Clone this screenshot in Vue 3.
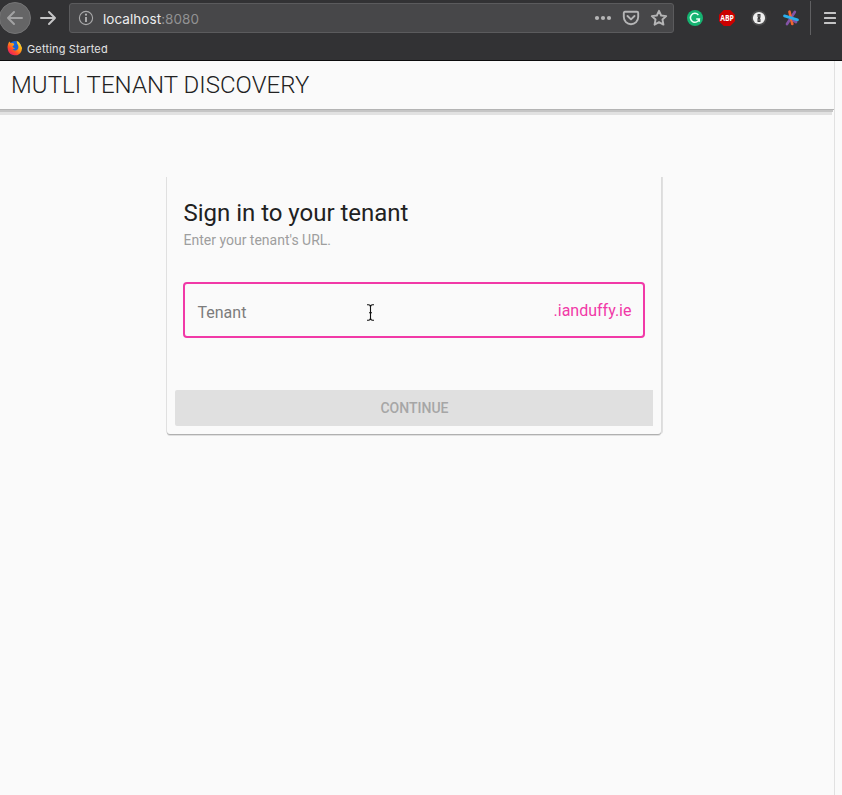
<script setup>
const host = 'localhost'
const port = ':8080'
const suffix = '.ianduffy.ie'
</script>

<template>
  <div class="window">
    <header class="chrome">
      <div class="toolbar">
        <div class="back">
          <svg width="18" height="18" viewBox="0 0 18 18" fill="none" stroke="#a2a2a3" stroke-width="2" stroke-linecap="round" stroke-linejoin="round"><path d="M16 9H2M8 3L2 9l6 6" /></svg>
        </div>
        <svg class="forward" width="18" height="18" viewBox="0 0 18 18" fill="none" stroke="#c5c5c6" stroke-width="2" stroke-linecap="round" stroke-linejoin="round"><path d="M2 9h14M10 3l6 6-6 6" /></svg>
        <div class="address">
          <svg class="info" width="16" height="16" viewBox="0 0 16 16"><circle cx="8" cy="8" r="6.6" fill="none" stroke="#a9a9aa" stroke-width="1.1" /><path d="M8 7v5" stroke="#b5b5b6" stroke-width="1.8" /><circle cx="8" cy="4.7" r="1.1" fill="#b5b5b6" /></svg>
          <span class="url">{{ host }}<span class="port">{{ port }}</span></span>
          <svg class="dots" width="18" height="6" viewBox="0 0 18 6" fill="#b5b5b6"><circle cx="3" cy="3" r="2.1" /><circle cx="9" cy="3" r="2.1" /><circle cx="15" cy="3" r="2.1" /></svg>
          <svg class="pocket" width="18" height="16" viewBox="0 0 18 16" fill="none" stroke="#b5b5b6" stroke-width="1.9" stroke-linecap="round" stroke-linejoin="round"><path d="M3 1.8h12q1.2 0 1.2 1.2v4a7.2 7.2 0 0 1-14.4 0V3Q1.8 1.8 3 1.8z" /><path d="M5.5 6L9 9.4 12.5 6" /></svg>
          <svg class="star" width="18" height="18" viewBox="0 0 18 18" fill="none" stroke="#b5b5b6" stroke-width="1.9" stroke-linejoin="round"><path d="M9 1.8l2.15 4.7 5.05.6-3.75 3.45 1 5.1L9 13.1l-4.45 2.55 1-5.1L1.8 7.1l5.05-.6z" /></svg>
        </div>
        <svg class="ext grammar" width="16" height="16" viewBox="0 0 16 16"><circle cx="8" cy="8" r="8" fill="#15b371" /><path d="M11.4 4.9A4.5 4.5 0 1 0 12.3 9H9.2M12.3 9v2.8" fill="none" stroke="#e9fff5" stroke-width="1.5" /></svg>
        <svg class="ext abp" width="16" height="16" viewBox="0 0 16 16"><path d="M4.8 0h6.4L16 4.8v6.4L11.2 16H4.8L0 11.2V4.8z" fill="#cb0000" /><text x="8" y="11.1" text-anchor="middle" textLength="13.6" lengthAdjust="spacingAndGlyphs">ABP</text></svg>
        <svg class="ext" width="16" height="16" viewBox="0 0 16 16"><circle cx="8" cy="8" r="7.7" fill="#4b4b4c" /><circle cx="8" cy="8" r="6.1" fill="#eee" /><path d="M6.5 4h3v3.5l-.6.7.6.7V12h-3V8.5l.6-.7-.6-.7z" fill="#3b3b3c" /><path d="M8 5v2.2M8 9v2" stroke="#aaa" stroke-width=".6" /></svg>
        <svg class="ext" width="16" height="16" viewBox="0 0 16 16" fill="none" stroke-width="2.7" stroke-linecap="round"><path d="M11.8 2L4 14" stroke="#8353a5" /><path d="M6.5 1.7L9.3 14" stroke="#f26430" /><path d="M10.5 10.5L13 12" stroke="#8353a5" /><path d="M1.5 5.9l13 4" stroke="#2caeea" /></svg>
        <div class="divider"></div>
        <svg class="menu" width="12" height="14" viewBox="0 0 12 14" fill="#c4c4c5"><rect y="1" width="12" height="2" rx=".5" /><rect y="6" width="12" height="2" rx=".5" /><rect y="11" width="12" height="2" rx=".5" /></svg>
      </div>
      <div class="bookmarks">
        <svg width="16" height="16" viewBox="0 0 16 16">
          <defs><linearGradient id="fire" x1="1" y1="0" x2=".2" y2="1"><stop offset="0" stop-color="#fff044" /><stop offset=".4" stop-color="#ffae14" /><stop offset=".7" stop-color="#ff4d29" /><stop offset="1" stop-color="#e81572" /></linearGradient></defs>
          <circle cx="8" cy="7.2" r="6.2" fill="#1764d7" />
          <path d="M2.2 1.5Q3 3 5 3.2 7 2.7 7.2 5L5.5 6.3Q5.5 8 8 8.2 6.9 9.3 5.5 9 8 11.8 10.5 9.5 12.5 7 10.2 3.7L9.6.8Q12 1.5 13.4 4.2q2.4 3.3 1.1 6.7A7.2 7.2 0 0 1 .9 10Q0 7 1 4.2z" fill="url(#fire)" />
        </svg>
        <span>Getting Started</span>
      </div>
    </header>

    <div class="viewport">
      <main class="page">
        <div class="app-bar"><h1>MUTLI TENANT DISCOVERY</h1></div>
        <form class="card" @submit.prevent>
          <div class="content">
            <h2>Sign in to your tenant</h2>
            <p>Enter your tenant's URL.</p>
            <div class="field">
              <span class="label">Tenant</span>
              <span class="suffix">{{ suffix }}</span>
              <svg class="cursor" width="9" height="17" viewBox="0 0 9 17" fill="none" stroke="#111" stroke-width="1.1"><path d="M1 .8h1.5Q4.5.8 4.5 3v11q0 2.2-2 2.2H1M8 .8H6.5Q4.5.8 4.5 3v11q0 2.2 2 2.2H8M3 8.8h3" /></svg>
            </div>
          </div>
          <button class="continue" disabled>CONTINUE</button>
        </form>
      </main>
      <div class="scroll-track"></div>
    </div>
  </div>
</template>

<style>
body { margin: 0; background: #fafafa; overflow: hidden; }
</style>

<style scoped>
* { box-sizing: border-box; }
.window { width: 842px; height: 795px; display: flex; flex-direction: column; overflow: hidden; background: #fafafa; font-family: Roboto, sans-serif; }
.chrome { height: 61px; flex: none; background: #323234; border-bottom: 1px solid #0c0c0d; font-family: Inter, sans-serif; }
.toolbar { height: 36px; display: flex; align-items: center; }
.toolbar svg { flex: none; display: block; }
.back { width: 32px; height: 32px; margin-left: -1px; border-radius: 50%; background: #656566; border: 1px solid #757576; display: flex; align-items: center; justify-content: center; flex: none; }
.forward { margin-left: 8px; }
.address { width: 605px; height: 30px; margin: 0 13px 0 12px; padding: 0 5px 0 8px; background: #474749; border: 1px solid #5b5b5d; border-radius: 3px; display: flex; align-items: center; flex: none; }
.url { margin-left: 9px; padding-top: 1px; font-size: 13.5px; letter-spacing: .05px; color: #ededee; flex: 1; }
.port { color: #929293; }
.pocket { margin-left: 10px; }
.star { margin-left: 10px; }
.ext { margin-right: 16px; flex: none; }
.abp text { fill: #fff; font: 700 8.6px "Open Sans", sans-serif; }
.divider { width: 1px; height: 34px; margin-left: -5px; background: #606062; flex: none; }
.menu { margin-left: 13px; }
.bookmarks { height: 24px; padding-left: 7px; display: flex; align-items: center; gap: 4px; font-size: 11px; letter-spacing: .16px; color: #e3e3e4; }
.bookmarks span { padding-top: 1px; }
.viewport { flex: 1; display: flex; }
.page { width: 834px; flex: none; }
.scroll-track { width: 8px; border-left: 1px solid #e1e1e1; }
.app-bar { height: 48px; padding-left: 11px; display: flex; align-items: center; box-shadow: 0 1px #b4b4b4, -1px 3px #c5c5c5, -2px 6px #e1e1e1; }
h1 { margin: 0; font-size: 24px; line-height: 32px; font-weight: 300; letter-spacing: .04px; color: #222; }
.card { width: 494px; height: 257px; margin: 68px 0 0 167px; padding: 16px 8px 8px; border-radius: 0 0 3px 3px; box-shadow: 0 1px #b0b0b0, -1px 0 #e0e0e0, 1px 0 #dcdcdc, 2px 0 #e0e0e0, 0 2px #e0e0e0; background: #fafafa; }
.content { padding: 0 8px; height: 197px; }
h2 { margin: 0 0 0 .5px; padding-top: 4px; font-size: 24px; line-height: 32px; font-weight: 400; letter-spacing: -.02px; color: #212121; }
p { margin: 1px 0 0 .5px; font-size: 14px; line-height: 20px; color: #9e9e9e; }
.field { position: relative; width: 462px; height: 56px; margin-top: 32px; padding: 0 11.5px 0 12.5px; border: 2px solid #f139a7; border-radius: 4px; display: flex; align-items: center; justify-content: space-between; font-size: 16px; }
.label { color: #7c7c7c; margin-top: 4px; }
.suffix { color: #f139a7; }
.cursor { position: absolute; left: 181px; top: 20px; }
.continue { display: block; width: 478px; height: 36px; border: 0; border-radius: 2px 0 0 2px; padding: 0 0 0 1px; background: #e0e0e0; color: #a6a6a6; font: 500 14px/36px Roboto, sans-serif; text-align: center; }
</style>
